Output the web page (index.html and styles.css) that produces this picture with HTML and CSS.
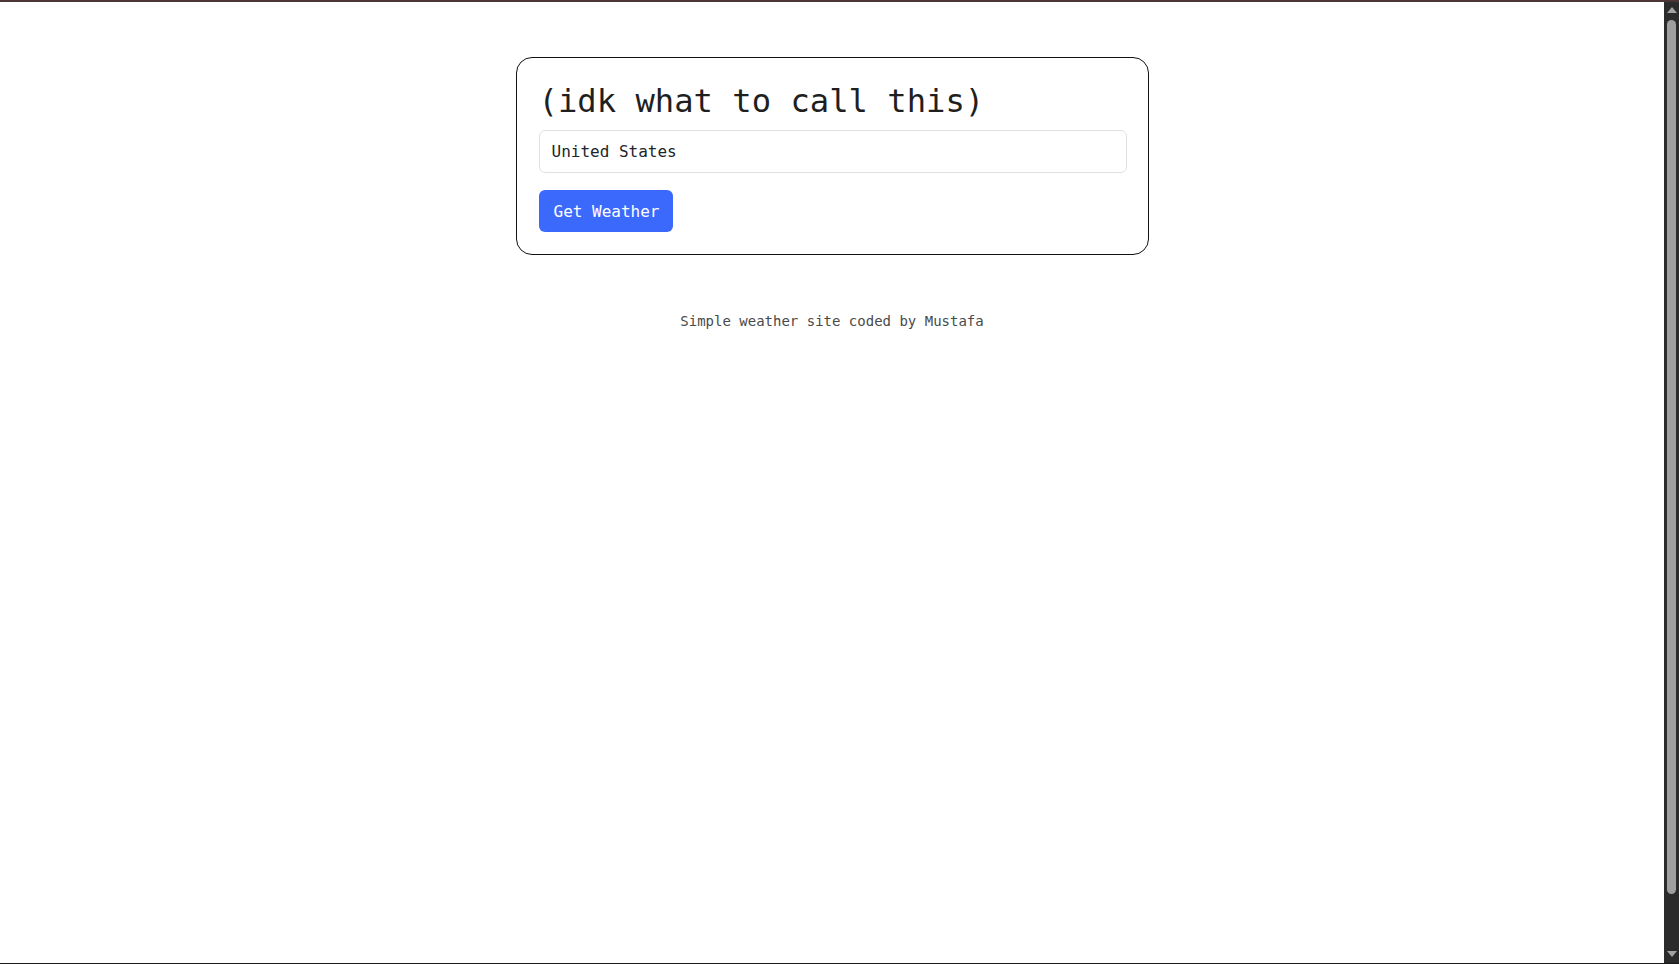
FILE: index.html
```html
<!DOCTYPE html>
<html lang="en">
<head>
<meta charset="utf-8">
<title>Weather</title>
<link rel="stylesheet" href="styles.css">
</head>
<body>
<div class="window">
  <main class="page">
    <section class="card">
      <h1 class="title">(idk what to call this)</h1>
      <input class="city" type="text" value="United States">
      <button class="btn" type="button">Get Weather</button>
    </section>
    <footer class="footer">Simple weather site coded by Mustafa</footer>
  </main>
  <div class="scrollbar">
    <span class="arrow arrow-up"></span>
    <span class="thumb"></span>
    <span class="arrow arrow-down"></span>
  </div>
</div>
</body>
</html>
```
FILE: styles.css
```css
html, body {
  margin: 0;
  padding: 0;
  height: 100%;
  overflow: hidden;
  background: #ffffff;
}

body {
  font-family: "DejaVu Sans Mono", "Liberation Mono", monospace;
  color: #212529;
}

.window {
  box-sizing: border-box;
  height: 100vh;
  display: grid;
  grid-template-columns: 1fr 15px;
  border-top: 2px solid #4b3434;
  border-bottom: 1px solid #1a1a1a;
}

.page {
  display: flex;
  flex-direction: column;
  align-items: center;
  padding-top: 55px;
}

.card {
  box-sizing: border-box;
  width: 633px;
  border: 1px solid #111;
  border-radius: 16px;
  padding: 23px 21px 22px 22px;
  display: flex;
  flex-direction: column;
  align-items: flex-start;
}

.title {
  margin: 0 0 9px 0;
  font-size: 32.2px;
  font-weight: 400;
  line-height: 40px;
  color: #1f1f1f;
}

.city {
  box-sizing: border-box;
  width: 100%;
  height: 43px;
  padding: 0 12px;
  border: 1px solid #dee2e6;
  border-radius: 6px;
  font-family: inherit;
  font-size: 16px;
  color: #212529;
  background: #fff;
  outline: none;
  margin: 0 0 17px 0;
}

.btn {
  box-sizing: border-box;
  height: 42px;
  padding: 0 14px 0 15px;
  border: none;
  border-radius: 6px;
  background: #3b69fc;
  color: #ffffff;
  font-family: inherit;
  font-size: 16px;
  cursor: pointer;
}

.footer {
  margin-top: 58px;
  font-size: 14px;
  color: #4a4a4a;
}

.scrollbar {
  background: #2b2b2b;
  display: flex;
  flex-direction: column;
  align-items: center;
  padding: 5px 0 6px;
}

.arrow {
  width: 0;
  height: 0;
  border-left: 5px solid transparent;
  border-right: 5px solid transparent;
}

.arrow-up {
  border-bottom: 6px solid #a3a3a3;
  margin-bottom: 7px;
}

.arrow-down {
  border-top: 6px solid #a3a3a3;
  margin-top: 7px;
}

.thumb {
  flex: 1;
  width: 9px;
  border-radius: 5px;
  background: #9f9f9f;
  margin-bottom: 50px;
}
```
